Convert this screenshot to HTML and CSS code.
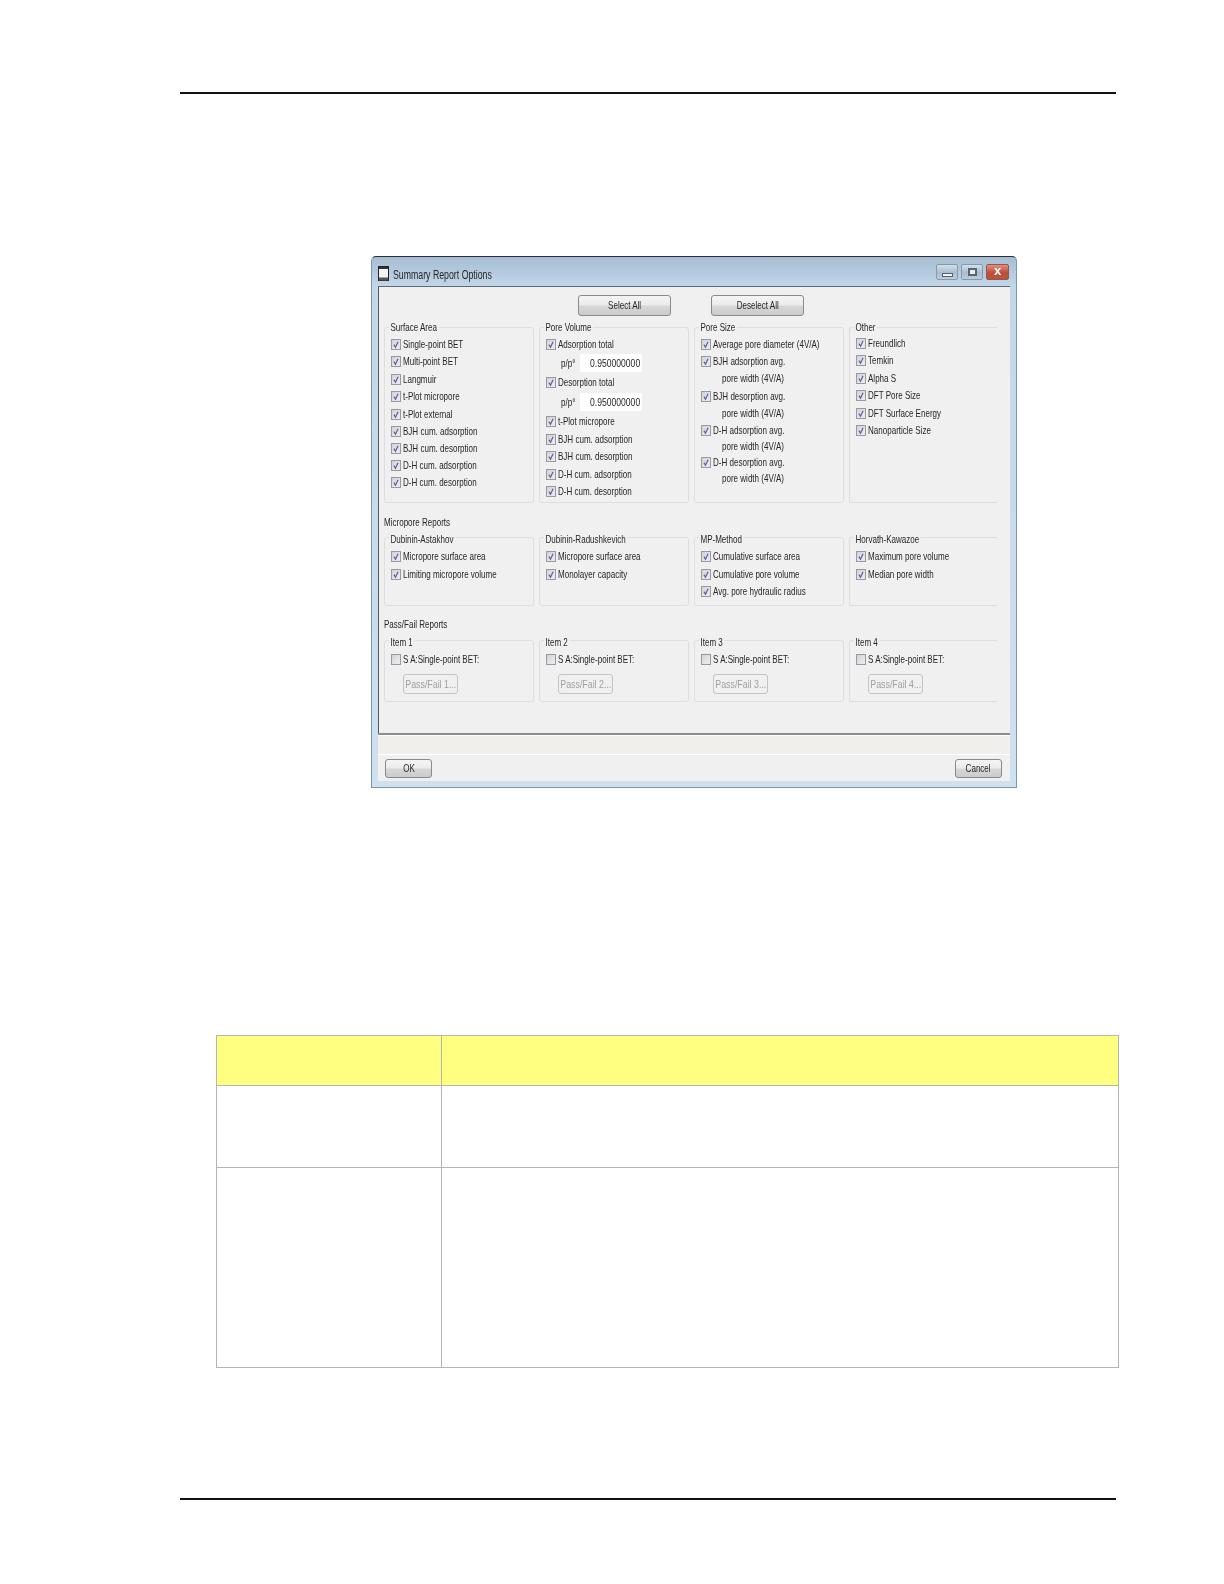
FILE: index.html
```html
<!DOCTYPE html>
<html lang="en">
<head>
<meta charset="utf-8">
<title>Summary Report Options</title>
<link rel="stylesheet" href="styles.css">
</head>
<body>
<svg class="defs" width="0" height="0" aria-hidden="true"><defs>
<symbol id="tick" viewBox="0 0 10 11"><path d="M2.4 5.6 4.4 8.8 7.6 2" fill="none" stroke="#56639c" stroke-width="1.5"/></symbol>
</defs></svg>
<div class="page">
  <div class="rule top-rule"></div>
  <section class="dialog">
    <header class="titlebar">
      <svg class="app-icon" width="11" height="15" viewBox="0 0 11 15"><rect x=".5" y=".5" width="10" height="14" fill="#f4f4f4" stroke="#222"/><rect x="1" y="1" width="9" height="2" fill="#333"/><rect x="1" y="11.5" width="9" height="3" fill="#555"/></svg>
      <span class="title t">Summary Report Options</span>
      <div class="winctl">
        <span class="wbtn wmin"><i></i></span>
        <span class="wbtn wmax"><i></i></span>
        <span class="wbtn wclose">x</span>
      </div>
    </header>
    <div class="client">
      <div class="panel">
        <div class="topbtns">
          <button class="btn btn-select"><span class="bt">Select All</span></button>
          <button class="btn btn-deselect"><span class="bt">Deselect All</span></button>
        </div>
        <div class="groups groups-main">
          <div class="grp">
            <span class="legend">Surface Area</span>
            <label class="ck h17"><span class="box"><svg><use href="#tick"/></svg></span><span class="t">Single-point BET</span></label>
            <label class="ck h17"><span class="box"><svg><use href="#tick"/></svg></span><span class="t">Multi-point BET</span></label>
            <label class="ck h18"><span class="box"><svg><use href="#tick"/></svg></span><span class="t">Langmuir</span></label>
            <label class="ck h17"><span class="box"><svg><use href="#tick"/></svg></span><span class="t">t-Plot micropore</span></label>
            <label class="ck h18"><span class="box"><svg><use href="#tick"/></svg></span><span class="t">t-Plot external</span></label>
            <label class="ck h17"><span class="box"><svg><use href="#tick"/></svg></span><span class="t">BJH cum. adsorption</span></label>
            <label class="ck h17"><span class="box"><svg><use href="#tick"/></svg></span><span class="t">BJH cum. desorption</span></label>
            <label class="ck h17"><span class="box"><svg><use href="#tick"/></svg></span><span class="t">D-H cum. adsorption</span></label>
            <label class="ck h17"><span class="box"><svg><use href="#tick"/></svg></span><span class="t">D-H cum. desorption</span></label>
          </div>
          <div class="grp">
            <span class="legend">Pore Volume</span>
            <label class="ck h17"><span class="box"><svg><use href="#tick"/></svg></span><span class="t">Adsorption total</span></label>
            <div class="pp h20"><span class="pl t">p/p°</span><span class="field"><span class="ft">0.950000000</span></span></div>
            <label class="ck h18"><span class="box"><svg><use href="#tick"/></svg></span><span class="t">Desorption total</span></label>
            <div class="pp h22"><span class="pl t">p/p°</span><span class="field"><span class="ft">0.950000000</span></span></div>
            <label class="ck h17"><span class="box"><svg><use href="#tick"/></svg></span><span class="t">t-Plot micropore</span></label>
            <label class="ck h18"><span class="box"><svg><use href="#tick"/></svg></span><span class="t">BJH cum. adsorption</span></label>
            <label class="ck h17"><span class="box"><svg><use href="#tick"/></svg></span><span class="t">BJH cum. desorption</span></label>
            <label class="ck h18"><span class="box"><svg><use href="#tick"/></svg></span><span class="t">D-H cum. adsorption</span></label>
            <label class="ck h17"><span class="box"><svg><use href="#tick"/></svg></span><span class="t">D-H cum. desorption</span></label>
          </div>
          <div class="grp">
            <span class="legend">Pore Size</span>
            <label class="ck h17"><span class="box"><svg><use href="#tick"/></svg></span><span class="t">Average pore diameter (4V/A)</span></label>
            <label class="ck h16"><span class="box"><svg><use href="#tick"/></svg></span><span class="t">BJH adsorption avg.</span></label>
            <div class="cont h19"><span class="t">pore width (4V/A)</span></div>
            <label class="ck h16"><span class="box"><svg><use href="#tick"/></svg></span><span class="t">BJH desorption avg.</span></label>
            <div class="cont h19"><span class="t">pore width (4V/A)</span></div>
            <label class="ck h15"><span class="box"><svg><use href="#tick"/></svg></span><span class="t">D-H adsorption avg.</span></label>
            <div class="cont h17"><span class="t">pore width (4V/A)</span></div>
            <label class="ck h15"><span class="box"><svg><use href="#tick"/></svg></span><span class="t">D-H desorption avg.</span></label>
            <div class="cont h17"><span class="t">pore width (4V/A)</span></div>
          </div>
          <div class="grp grp-open">
            <span class="legend">Other</span>
            <label class="ck h17 up1"><span class="box"><svg><use href="#tick"/></svg></span><span class="t">Freundlich</span></label>
            <label class="ck h17"><span class="box"><svg><use href="#tick"/></svg></span><span class="t">Temkin</span></label>
            <label class="ck h18"><span class="box"><svg><use href="#tick"/></svg></span><span class="t">Alpha S</span></label>
            <label class="ck h17"><span class="box"><svg><use href="#tick"/></svg></span><span class="t">DFT Pore Size</span></label>
            <label class="ck h18"><span class="box"><svg><use href="#tick"/></svg></span><span class="t">DFT Surface Energy</span></label>
            <label class="ck h17"><span class="box"><svg><use href="#tick"/></svg></span><span class="t">Nanoparticle Size</span></label>
          </div>
        </div>
        <div class="sect sect-micro"><span class="t">Micropore Reports</span></div>
        <div class="groups groups-micro">
          <div class="grp">
            <span class="legend">Dubinin-Astakhov</span>
            <label class="ck h19"><span class="box"><svg><use href="#tick"/></svg></span><span class="t">Micropore surface area</span></label>
            <label class="ck h17"><span class="box"><svg><use href="#tick"/></svg></span><span class="t">Limiting micropore volume</span></label>
          </div>
          <div class="grp">
            <span class="legend">Dubinin-Radushkevich</span>
            <label class="ck h19"><span class="box"><svg><use href="#tick"/></svg></span><span class="t">Micropore surface area</span></label>
            <label class="ck h17"><span class="box"><svg><use href="#tick"/></svg></span><span class="t">Monolayer capacity</span></label>
          </div>
          <div class="grp">
            <span class="legend">MP-Method</span>
            <label class="ck h19"><span class="box"><svg><use href="#tick"/></svg></span><span class="t">Cumulative surface area</span></label>
            <label class="ck h17"><span class="box"><svg><use href="#tick"/></svg></span><span class="t">Cumulative pore volume</span></label>
            <label class="ck h17"><span class="box"><svg><use href="#tick"/></svg></span><span class="t">Avg. pore hydraulic radius</span></label>
          </div>
          <div class="grp grp-open">
            <span class="legend">Horvath-Kawazoe</span>
            <label class="ck h19"><span class="box"><svg><use href="#tick"/></svg></span><span class="t">Maximum pore volume</span></label>
            <label class="ck h17"><span class="box"><svg><use href="#tick"/></svg></span><span class="t">Median pore width</span></label>
          </div>
        </div>
        <div class="sect sect-pass"><span class="t">Pass/Fail Reports</span></div>
        <div class="groups groups-pass">
          <div class="grp">
            <span class="legend">Item 1</span>
            <label class="ck h19"><span class="box"></span><span class="t">S A:Single-point BET:</span></label>
            <button class="pf"><span class="bt">Pass/Fail 1...</span></button>
          </div>
          <div class="grp">
            <span class="legend">Item 2</span>
            <label class="ck h19"><span class="box"></span><span class="t">S A:Single-point BET:</span></label>
            <button class="pf"><span class="bt">Pass/Fail 2...</span></button>
          </div>
          <div class="grp">
            <span class="legend">Item 3</span>
            <label class="ck h19"><span class="box"></span><span class="t">S A:Single-point BET:</span></label>
            <button class="pf"><span class="bt">Pass/Fail 3...</span></button>
          </div>
          <div class="grp grp-open">
            <span class="legend">Item 4</span>
            <label class="ck h19"><span class="box"></span><span class="t">S A:Single-point BET:</span></label>
            <button class="pf"><span class="bt">Pass/Fail 4...</span></button>
          </div>
        </div>
      </div>
      <div class="status"></div>
      <footer class="actions">
        <button class="btn btn-foot"><span class="bt">OK</span></button>
        <button class="btn btn-foot"><span class="bt">Cancel</span></button>
      </footer>
    </div>
  </section>
  <table class="params">
    <tr class="thead"><th class="c1"></th><th></th></tr>
    <tr class="r1"><td class="c1"></td><td></td></tr>
    <tr class="r2"><td class="c1"></td><td></td></tr>
  </table>
  <div class="rule bottom-rule"></div>
</div>
</body>
</html>
```
FILE: styles.css
```css
* { box-sizing: border-box; }
html, body { margin: 0; padding: 0; background: #fff; }
.defs { position: absolute; }
.page { width: 1224px; height: 1584px; padding-top: 92px; display: flex; flex-direction: column; }
.rule { height: 2px; background: #111; margin-left: 180px; width: 936px; flex: none; }

.dialog {
  margin: 162px 0 0 371px; width: 646px; height: 532px; flex: none;
  display: flex; flex-direction: column; padding: 0 6px 6px;
  background: linear-gradient(#a6bdd3 0, #c3d7e9 30px, #cfe0ef 100%);
  border: 1px solid #7a98b0; border-top-color: #2a2f36; border-radius: 5px 5px 0 0;
  font: 11px/1 "Liberation Sans", sans-serif;
  color: #262626; filter: blur(.3px);
}
.t { display: inline-block; white-space: nowrap; transform: scaleX(.73); transform-origin: left center; }
.bt { display: inline-block; white-space: nowrap; transform: scaleX(.73); }
.titlebar { height: 29px; display: flex; align-items: center; flex: none; gap: 4px; }
.app-icon { margin-top: 3px; flex: none; }
.title { font-size: 12px; margin-top: 7px; }
.winctl { margin-left: auto; display: flex; gap: 3px; margin-top: 1px; margin-right: 1px; }
.wbtn { width: 22px; height: 16px; border: 1px solid #8599ad; border-radius: 2px; background: linear-gradient(#d3e0ec, #a9bccf 55%, #bccddd); display: flex; align-items: center; justify-content: center; }
.wmin i { width: 11px; height: 4px; background: #eef3f8; border: 1px solid #56616d; margin-top: 6px; }
.wmax i { width: 9px; height: 8px; border: 2px solid #5a6570; background: #e6edf4; }
.wclose { background: linear-gradient(#df9180, #c04d36 55%, #b5553f); border-color: #96574b; color: #fff; font: bold 13px/1 "Liberation Sans", sans-serif; width: 23px; padding-bottom: 3px; }

.client { flex: 1; background: #f0f0f0; border-top: 1px solid #5c6a78; display: flex; flex-direction: column; }
.panel { flex: 1; border-left: 1px solid #4e5a66; padding-top: 8px; display: flex; flex-direction: column; }
.topbtns { display: flex; padding-left: 199px; gap: 40px; flex: none; }
.btn {
  height: 21px; border: 1px solid #8a8a8a; border-radius: 3px; padding: 0;
  background: linear-gradient(#f4f4f4 0, #ececec 45%, #d6d6d6 55%, #cbcbcb 100%);
  font: inherit; color: #262626;
}
.btn-select, .btn-deselect { width: 93px; }

.groups { display: grid; grid-template-columns: repeat(4, 150px); column-gap: 5px; padding-left: 5px; flex: none; }
.groups-main { margin-top: 11px; height: 176px; }
.groups-micro { margin-top: 10px; height: 69px; }
.groups-pass { margin-top: 10px; height: 62px; }
.grp {
  position: relative; border: 1px solid #dedede; border-radius: 3px;
  padding: 8px 0 0 6px; display: flex; flex-direction: column;
}
.grp-open { border-right-color: transparent; }
.legend {
  position: absolute; top: -6px; left: 4px; padding: 0 2px; background: #f0f0f0; line-height: 11px;
  white-space: nowrap; transform: scaleX(.73); transform-origin: left center;
}
.groups-micro .legend, .groups-pass .legend { top: -4px; }
.groups-micro .grp, .groups-pass .grp { padding-top: 9px; }
.ck { display: flex; align-items: center; gap: 2px; flex: none; white-space: nowrap; }
.box { width: 10px; height: 11px; flex: none; border: 1px solid #9a9a9e; background: linear-gradient(135deg, #d0d0d6, #e8e8ec 70%); display: block; }
.box svg { display: block; width: 8px; height: 9px; }
.h15 { height: 15px; } .h16 { height: 16px; } .h17 { height: 17px; } .h18 { height: 18px; }
.h19 { height: 19px; } .h20 { height: 20px; } .h22 { height: 22px; }
.up1 { margin-top: -1px; }
.cont { padding-left: 21px; display: flex; align-items: center; flex: none; }
.pp { display: flex; align-items: center; padding-left: 15px; flex: none; }
.pl { width: 19px; flex: none; }
.field { width: 62px; height: 18px; background: #fff; display: flex; align-items: center; justify-content: center; padding-left: 8px; }
.ft { display: inline-block; white-space: nowrap; transform: scaleX(.78); }
.sect { padding-left: 5px; flex: none; line-height: 11px; }
.sect-micro { margin-top: 14px; height: 10px; }
.sect-pass { margin-top: 13px; height: 11px; }
.pf {
  width: 55px; height: 20px; margin: 5px 0 0 12px; border: 1px solid #c4c4c4; border-radius: 3px;
  background: #f0f0f0; font: inherit; color: #a0a0a0; padding: 0; flex: none;
}
.pf .bt { transform: scaleX(.8); margin: 0 -10px; }
.status { height: 22px; flex: none; background: #f1efec; border-top: 2px solid #8e8e8e; border-bottom: 1px solid #fff; box-shadow: inset 0 1px 0 #fff; }
.actions { height: 26px; flex: none; display: flex; justify-content: space-between; padding: 4px 8px 0 7px; }
.btn-foot { width: 47px; height: 19px; }

.params {
  margin: 247px 0 0 216px; width: 903px; height: 333px; border-collapse: collapse; table-layout: fixed; flex: none;
}
.params th, .params td { border: 1px solid #b4b4b4; padding: 0; }
.c1 { width: 225px; }
.thead { height: 50px; }
.thead th { background: #ffff80; }
.r1 { height: 82px; }
.r2 { height: 200px; }
.bottom-rule { margin-top: 130px; }
```
